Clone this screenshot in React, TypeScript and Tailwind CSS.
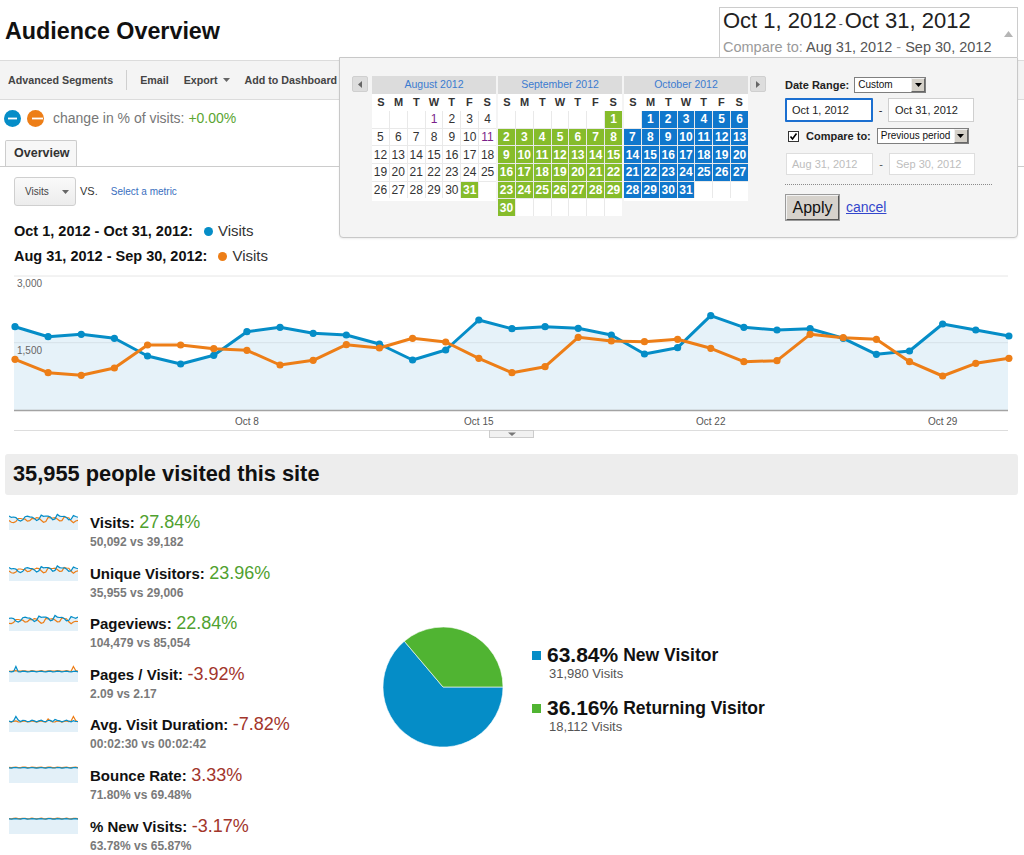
import React from "react";

const BLUE = "#058dc7";
const ORANGE = "#ed7e17";
const GREEN_CELL = "#86bc2b";
const BLUE_CELL = "#1077cc";

const blueY = [326.7, 336.7, 334.3, 338.3, 356, 364, 355.3, 331.7, 327.3, 333.3, 335, 344, 360, 350, 320, 328.7, 326.7, 328.3, 335, 354, 347.7, 315.7, 327.3, 330, 328.7, 338.3, 354.3, 351, 324, 330, 336];
const orangeY = [359.3, 372.7, 375.3, 368, 345, 345, 348.7, 350.3, 365, 360.3, 344.7, 348, 338.3, 342, 358.3, 372.7, 366.7, 337.3, 341, 341.7, 339.3, 348.3, 361.7, 360.7, 334.3, 337.7, 339.3, 361.7, 376, 363.3, 358.3];

const OFF = 269;
const cx = (i: number) => 15 + i * 33.13;

function Chart() {
  const bPts = blueY.map((y, i) => `${cx(i).toFixed(1)},${(y - OFF).toFixed(1)}`);
  const oPts = orangeY.map((y, i) => `${cx(i).toFixed(1)},${(y - OFF).toFixed(1)}`);
  const area = `M14,141.5 L14,${(blueY[0] - OFF).toFixed(1)} L${bPts.join(" L")} L1008,${(blueY[30] - OFF).toFixed(1)} L1008,141.5 Z`;
  const labels = [
    { t: "Oct 8", i: 7 },
    { t: "Oct 15", i: 14 },
    { t: "Oct 22", i: 21 },
    { t: "Oct 29", i: 28 },
  ];
  return (
    <svg width="1024" height="171" className="block">
      <line x1="14" y1="7" x2="1008" y2="7" stroke="#e6e6e6" strokeWidth="1" />
      <path d={area} fill="#e6f2f9" />
      <line x1="14" y1="73.7" x2="1008" y2="73.7" stroke="rgba(0,0,0,0.07)" strokeWidth="1" />
      <text x="17" y="18" fontSize="10" fill="#666" fontFamily="'Liberation Sans', Arial, sans-serif">3,000</text>
      <text x="17" y="85" fontSize="10" fill="#666" fontFamily="'Liberation Sans', Arial, sans-serif">1,500</text>
      <polyline points={bPts.join(" ")} fill="none" stroke={BLUE} strokeWidth="3" strokeLinejoin="round" />
      <polyline points={oPts.join(" ")} fill="none" stroke={ORANGE} strokeWidth="3" strokeLinejoin="round" />
      {blueY.map((y, i) => (
        <circle key={"b" + i} cx={cx(i)} cy={y - OFF} r="3.6" fill={BLUE} />
      ))}
      {orangeY.map((y, i) => (
        <circle key={"o" + i} cx={cx(i)} cy={y - OFF} r="3.6" fill={ORANGE} />
      ))}
      <line x1="14" y1="141.5" x2="1008" y2="141.5" stroke="#a3a3a3" strokeWidth="1.5" />
      {labels.map((l) => (
        <text key={l.t} x={cx(l.i)} y="156" fontSize="10" fill="#555" textAnchor="middle" fontFamily="'Liberation Sans', Arial, sans-serif">
          {l.t}
        </text>
      ))}
      <line x1="14" y1="161.5" x2="1008" y2="161.5" stroke="#dddddd" strokeWidth="1" />
      <rect x="489.5" y="161.5" width="44" height="7" fill="#f1f1f1" stroke="#cccccc" />
      <path d="M508,163.5 L516,163.5 L512,167 Z" fill="#777" />
    </svg>
  );
}

function Spark({ b, o }: { b: number[]; o: number[] }) {
  const w = 69;
  const h = 17;
  const pts = (a: number[]) => a.map((v, i) => `${((i * w) / (a.length - 1)).toFixed(1)},${v.toFixed(1)}`);
  const bp = pts(b);
  const area = `M0,${h} L${bp.join(" L")} L${w},${h} Z`;
  return (
    <svg width={w} height={h} className="block">
      <path d={area} fill="#e3f0f8" />
      <polyline points={pts(o).join(" ")} fill="none" stroke={ORANGE} strokeWidth="1.2" />
      <polyline points={bp.join(" ")} fill="none" stroke={BLUE} strokeWidth="1.2" />
    </svg>
  );
}

const sb = (shift: number) => blueY.map((y, i) => 1 + ((blueY[(i + shift) % 31] - 312) * 9) / 66);
const so = (shift: number) => orangeY.map((y, i) => 1 + ((orangeY[(i + shift) % 31] - 312) * 9) / 66);
const flat = (base: number, spikes: Record<number, number>, jitter = 0) =>
  Array.from({ length: 31 }, (_, i) => (spikes[i] !== undefined ? spikes[i] : base + (jitter ? Math.sin(i * 1.7) * jitter : 0)));

const metrics = [
  { label: "Visits:", value: "27.84%", good: true, sub: "50,092 vs 39,182", b: sb(0), o: so(0) },
  { label: "Unique Visitors:", value: "23.96%", good: true, sub: "35,955 vs 29,006", b: sb(0).map((v) => v + 0.5), o: so(0).map((v) => v - 0.5) },
  { label: "Pageviews:", value: "22.84%", good: true, sub: "104,479 vs 85,054", b: sb(1), o: so(1) },
  { label: "Pages / Visit:", value: "-3.92%", good: false, sub: "2.09 vs 2.17", b: flat(6.5, { 3: 1.5 }, 0.4), o: flat(6, { 28: 1.5, 29: 5.5 }, 0.3) },
  { label: "Avg. Visit Duration:", value: "-7.82%", good: false, sub: "00:02:30 vs 00:02:42", b: flat(6, { 3: 1.5, 4: 5, 20: 4.5, 29: 6.5 }, 0.8), o: flat(6.5, { 17: 4, 27: 6, 28: 1.5, 29: 5.5 }, 0.6) },
  { label: "Bounce Rate:", value: "3.33%", good: false, sub: "71.80% vs 69.48%", b: flat(1.8, {}, 0.3), o: flat(1.4, {}, 0.3) },
  { label: "% New Visits:", value: "-3.17%", good: false, sub: "63.78% vs 65.87%", b: flat(1.9, {}, 0.3), o: flat(1.5, {}, 0.3) },
];

function Month({ title, start, days, color, purple = [] }: { title: string; start: number; days: number; color: (d: number) => string | null; purple?: number[] }) {
  const rows = Math.ceil((start + days) / 7);
  const cells = Array.from({ length: rows * 7 }, (_, i) => {
    const d = i - start + 1;
    return d >= 1 && d <= days ? d : null;
  });
  return (
    <div className="w-[124px]">
      <div className="flex h-[18px] items-center justify-center bg-[#dcdcdc] text-[10.5px] text-[#3b7bd0]">{title}</div>
      <div className="grid h-[17px] grid-cols-7 items-center bg-white text-center text-[11px] font-bold text-[#333]">
        {["S", "M", "T", "W", "T", "F", "S"].map((d, i) => (
          <span key={i}>{d}</span>
        ))}
      </div>
      <div className="grid grid-cols-7 gap-px bg-[#e9e9e9]">
        {cells.map((d, i) => {
          const c = d ? color(d) : null;
          return (
            <div
              key={i}
              className={`flex h-[16.7px] items-center justify-center text-[12px] ${c ? "font-bold text-white" : d && purple.includes(d) ? "text-[#7a1f8a]" : "text-[#333]"}`}
              style={{ backgroundColor: c || "#ffffff" }}
            >
              {d ?? ""}
            </div>
          );
        })}
      </div>
      {rows === 5 && <div className="h-[3px] bg-white" />}
    </div>
  );
}

function SmallSelect({ text, w }: { text: string; w: number }) {
  return (
    <div className="flex h-[16px] items-center border border-[#7f7f7f] bg-white" style={{ width: w }}>
      <span className="flex-1 pl-[3px] text-[10px] leading-[14px] text-[#111]">{text}</span>
      <span className="flex h-[14px] w-[14px] items-center justify-center border border-[#f0f0f0] border-r-[#666] border-b-[#666] bg-[#d4d0c8]">
        <svg width="7" height="4"><path d="M0,0 L7,0 L3.5,4 Z" fill="#000" /></svg>
      </span>
    </div>
  );
}

function DatePopup() {
  return (
    <div className="absolute left-[339px] top-[57px] h-[181px] w-[679px] rounded-b-[4px] border border-[#c8c8c8] bg-[#f4f4f4] shadow-[0_1px_2px_rgba(0,0,0,0.08)]">
      <div className="flex pl-[12px] pt-[18px]">
        <div className="flex h-[16px] w-[16px] items-center justify-center rounded-[2px] border border-[#cfcfcf] bg-[#dddddd]">
          <svg width="4" height="7"><path d="M4,0 L4,7 L0,3.5 Z" fill="#666" /></svg>
        </div>
        <div className="ml-[4px] flex items-start gap-[2px]">
          <Month title="August 2012" start={3} days={31} color={(d) => (d === 31 ? GREEN_CELL : null)} purple={[1, 11]} />
          <Month title="September 2012" start={6} days={30} color={() => GREEN_CELL} />
          <Month title="October 2012" start={1} days={31} color={() => BLUE_CELL} />
        </div>
        <div className="ml-[2px] flex h-[16px] w-[16px] items-center justify-center rounded-[2px] border border-[#cfcfcf] bg-[#dddddd]">
          <svg width="4" height="7"><path d="M0,0 L0,7 L4,3.5 Z" fill="#666" /></svg>
        </div>
        <div className="ml-[19px] w-[207px] text-[#222]">
          <div className="mt-[1px] flex h-[16px] items-center">
            <span className="text-[11px] font-bold">Date Range:</span>
            <div className="ml-[5px]">
              <SmallSelect text="Custom" w={72} />
            </div>
          </div>
          <div className="mt-[5px] flex h-[24px] items-center">
            <div className="flex h-[24px] w-[88px] items-center rounded-[1px] border-2 border-[#1b6fd0] bg-white pl-[5px] text-[11px]">Oct 1, 2012</div>
            <span className="w-[15px] text-center text-[11px]">-</span>
            <div className="flex h-[24px] w-[86px] items-center border border-[#cfcfcf] bg-white pl-[6px] text-[11px]">Oct 31, 2012</div>
          </div>
          <div className="mt-[6px] flex h-[16px] items-center">
            <div className="ml-[3px] flex h-[11px] w-[11px] items-center justify-center border border-[#333] bg-white">
              <svg width="9" height="9" viewBox="0 0 9 9"><path d="M1.5,4.5 L3.5,7 L7.5,1.5" fill="none" stroke="#000" strokeWidth="1.6" /></svg>
            </div>
            <span className="ml-[7px] text-[11px] font-bold">Compare to:</span>
            <div className="ml-[6px]">
              <SmallSelect text="Previous period" w={92} />
            </div>
          </div>
          <div className="mt-[9px] flex h-[22px] items-center">
            <div className="ml-[1px] flex h-[22px] w-[87px] items-center border border-[#dedede] bg-white pl-[5px] text-[11px] text-[#bdbdbd]">Aug 31, 2012</div>
            <span className="w-[16px] text-center text-[11px] text-[#555]">-</span>
            <div className="flex h-[22px] w-[86px] items-center border border-[#dedede] bg-white pl-[6px] text-[11px] text-[#bdbdbd]">Sep 30, 2012</div>
          </div>
          <div className="mt-[9px] w-[207px] border-t border-dotted border-[#8a8a8a]" />
          <div className="mt-[10px] flex h-[25px] items-center">
            <div className="ml-[1px] flex h-[25px] w-[53px] items-center justify-center border border-[#f2f2f2] border-r-[#555] border-b-[#555] bg-[#d6d2cc] text-[16px] text-[#111] shadow-[0_0_0_1px_#9a9a9a]">
              Apply
            </div>
            <span className="ml-[7px] text-[14px] text-[#3346cc] underline">cancel</span>
          </div>
        </div>
      </div>
    </div>
  );
}

function Pie() {
  return (
    <svg width="120" height="120" className="block">
      <path d="M60,60 L21.3,14.2 A60,60 0 1,0 120,60 Z" fill="#058dc7" stroke="#fff" strokeWidth="0.6" />
      <path d="M60,60 L120,60 A60,60 0 0,0 21.3,14.2 Z" fill="#50b432" stroke="#fff" strokeWidth="0.6" />
    </svg>
  );
}

export default function App() {
  return (
    <div className="relative h-[855px] w-[1024px] overflow-hidden bg-white font-['Liberation_Sans',Arial,sans-serif] text-[#222]">
      {/* header */}
      <div className="flex h-[60px] items-start justify-between">
        <h1 className="pl-[5px] pt-[20px] text-[23.3px] font-bold leading-[23px] text-[#111]">Audience Overview</h1>
        <div className="mr-[6px] mt-[7px] flex h-[50px] w-[299px] border border-b-0 border-[#cccccc] bg-white">
          <div className="flex-1 pl-[3px]">
            <div className="whitespace-nowrap text-[22px] leading-[26px] text-[#222]">
              Oct 1, 2012<span className="mx-[2px] text-[12px] text-[#555]">-</span>Oct 31, 2012
            </div>
            <div className="mt-[2px] whitespace-nowrap text-[14.5px] leading-[17px] text-[#9a9a9a]">
              Compare to: <span className="text-[#555]">Aug 31, 2012</span> - <span className="text-[#555]">Sep 30, 2012</span>
            </div>
          </div>
          <div className="flex w-[18px] justify-center pt-[23px]">
            <svg width="9" height="6"><path d="M0,6 L9,6 L4.5,0 Z" fill="#b5b5b5" /></svg>
          </div>
        </div>
      </div>

      {/* toolbar */}
      <div className="flex h-[40px] items-center border-y border-[#dcdcdc] bg-[#f4f4f4] pl-[8px] text-[10.7px] font-bold text-[#444]">
        <span>Advanced Segments</span>
        <span className="ml-[13px] h-[20px] w-px bg-[#cfcfcf]" />
        <span className="ml-[13px]">Email</span>
        <span className="ml-[15px]">Export</span>
        <svg className="ml-[5px]" width="7" height="4"><path d="M0,0 L7,0 L3.5,4 Z" fill="#666" /></svg>
        <span className="ml-[15px]">Add to Dashboard</span>
      </div>

      {/* change row */}
      <div className="flex h-[36px] items-center pl-[4px]">
        <svg width="17" height="17" className="block">
          <circle cx="8.5" cy="8.5" r="8.5" fill={BLUE} />
          <rect x="4" y="7.6" width="9" height="1.8" fill="#fff" />
        </svg>
        <svg width="17" height="17" className="ml-[6px] block">
          <circle cx="8.5" cy="8.5" r="8.5" fill={ORANGE} />
          <rect x="5" y="7.6" width="11" height="1.8" fill="#fff" />
        </svg>
        <span className="ml-[9px] text-[14px] text-[#777]">
          change in % of visits: <span className="text-[#5ba532]">+0.00%</span>
        </span>
      </div>

      {/* tabs */}
      <div className="mt-[4px] flex h-[27px] border-b border-[#cccccc] pl-[5px]">
        <div className="flex h-full w-[72px] items-center rounded-t-[2px] border border-b-0 border-[#cccccc] bg-[#f7f7f7] pl-[8px] text-[12.5px] font-bold text-[#333]">
          Overview
        </div>
      </div>

      {/* metric select */}
      <div className="mt-[10px] flex h-[29px] items-center pl-[14px]">
        <div className="flex h-[29px] w-[62px] items-center rounded-[3px] border border-[#cfcfcf] bg-gradient-to-b from-[#fafafa] to-[#ececec] pl-[10px] text-[10px] text-[#444]">
          <span>Visits</span>
          <svg className="ml-[13px]" width="7" height="4"><path d="M0,0 L7,0 L3.5,4 Z" fill="#666" /></svg>
        </div>
        <span className="ml-[4px] text-[11px] text-[#333]">VS.</span>
        <span className="ml-[13px] text-[10px] text-[#3a6fc0]">Select a metric</span>
      </div>

      {/* legend */}
      <div className="mt-[13px] pl-[14px]">
        <div className="flex h-[25px] items-center">
          <span className="text-[14.5px] font-bold text-[#111]">Oct 1, 2012 - Oct 31, 2012:</span>
          <span className="ml-[11px] h-[9px] w-[9px] rounded-full" style={{ backgroundColor: BLUE }} />
          <span className="ml-[5px] text-[15px] text-[#333]">Visits</span>
        </div>
        <div className="flex h-[25px] items-center">
          <span className="text-[14.5px] font-bold text-[#111]">Aug 31, 2012 - Sep 30, 2012:</span>
          <span className="ml-[11px] h-[9px] w-[9px] rounded-full" style={{ backgroundColor: ORANGE }} />
          <span className="ml-[5px] text-[15px] text-[#333]">Visits</span>
        </div>
      </div>

      {/* chart */}
      <Chart />

      {/* headline */}
      <div className="ml-[5px] mt-[14px] flex h-[41px] w-[1013px] items-center rounded-[3px] bg-[#ededed] pl-[8px] text-[21.8px] font-bold text-[#111]">
        35,955 people visited this site
      </div>

      {/* lower section */}
      <div className="flex">
        <div className="w-[383px] pt-[17px]">
          {metrics.map((m) => (
            <div key={m.label} className="flex h-[50.6px]">
              <div className="ml-[9px] mt-[1px]">
                <Spark b={m.b} o={m.o} />
              </div>
              <div className="ml-[12px]">
                <div className="whitespace-nowrap leading-[20px]">
                  <span className="text-[15px] font-bold text-[#111]">{m.label}</span>{" "}
                  <span className={`text-[18px] ${m.good ? "text-[#50a12f]" : "text-[#a2352b]"}`}>{m.value}</span>
                </div>
                <div className="mt-[2px] text-[12px] font-bold leading-[14px] text-[#7a7a7a]">{m.sub}</div>
              </div>
            </div>
          ))}
        </div>
        <div className="mt-[132px]">
          <Pie />
        </div>
        <div className="ml-[29px] mt-[149px]">
          <div className="flex h-[22px] items-center">
            <span className="h-[9px] w-[9px]" style={{ backgroundColor: "#058dc7" }} />
            <span className="ml-[6px] text-[21px] font-bold text-[#111]">63.84%</span>
            <span className="ml-[5px] text-[17.5px] font-bold text-[#111]">New Visitor</span>
          </div>
          <div className="h-[16px] pl-[17px] text-[13px] leading-[16px] text-[#555]">31,980 Visits</div>
          <div className="mt-[15px] flex h-[22px] items-center">
            <span className="h-[9px] w-[9px]" style={{ backgroundColor: "#50b432" }} />
            <span className="ml-[6px] text-[21px] font-bold text-[#111]">36.16%</span>
            <span className="ml-[5px] text-[17.5px] font-bold text-[#111]">Returning Visitor</span>
          </div>
          <div className="h-[16px] pl-[17px] text-[13px] leading-[16px] text-[#555]">18,112 Visits</div>
        </div>
      </div>

      <DatePopup />
    </div>
  );
}
